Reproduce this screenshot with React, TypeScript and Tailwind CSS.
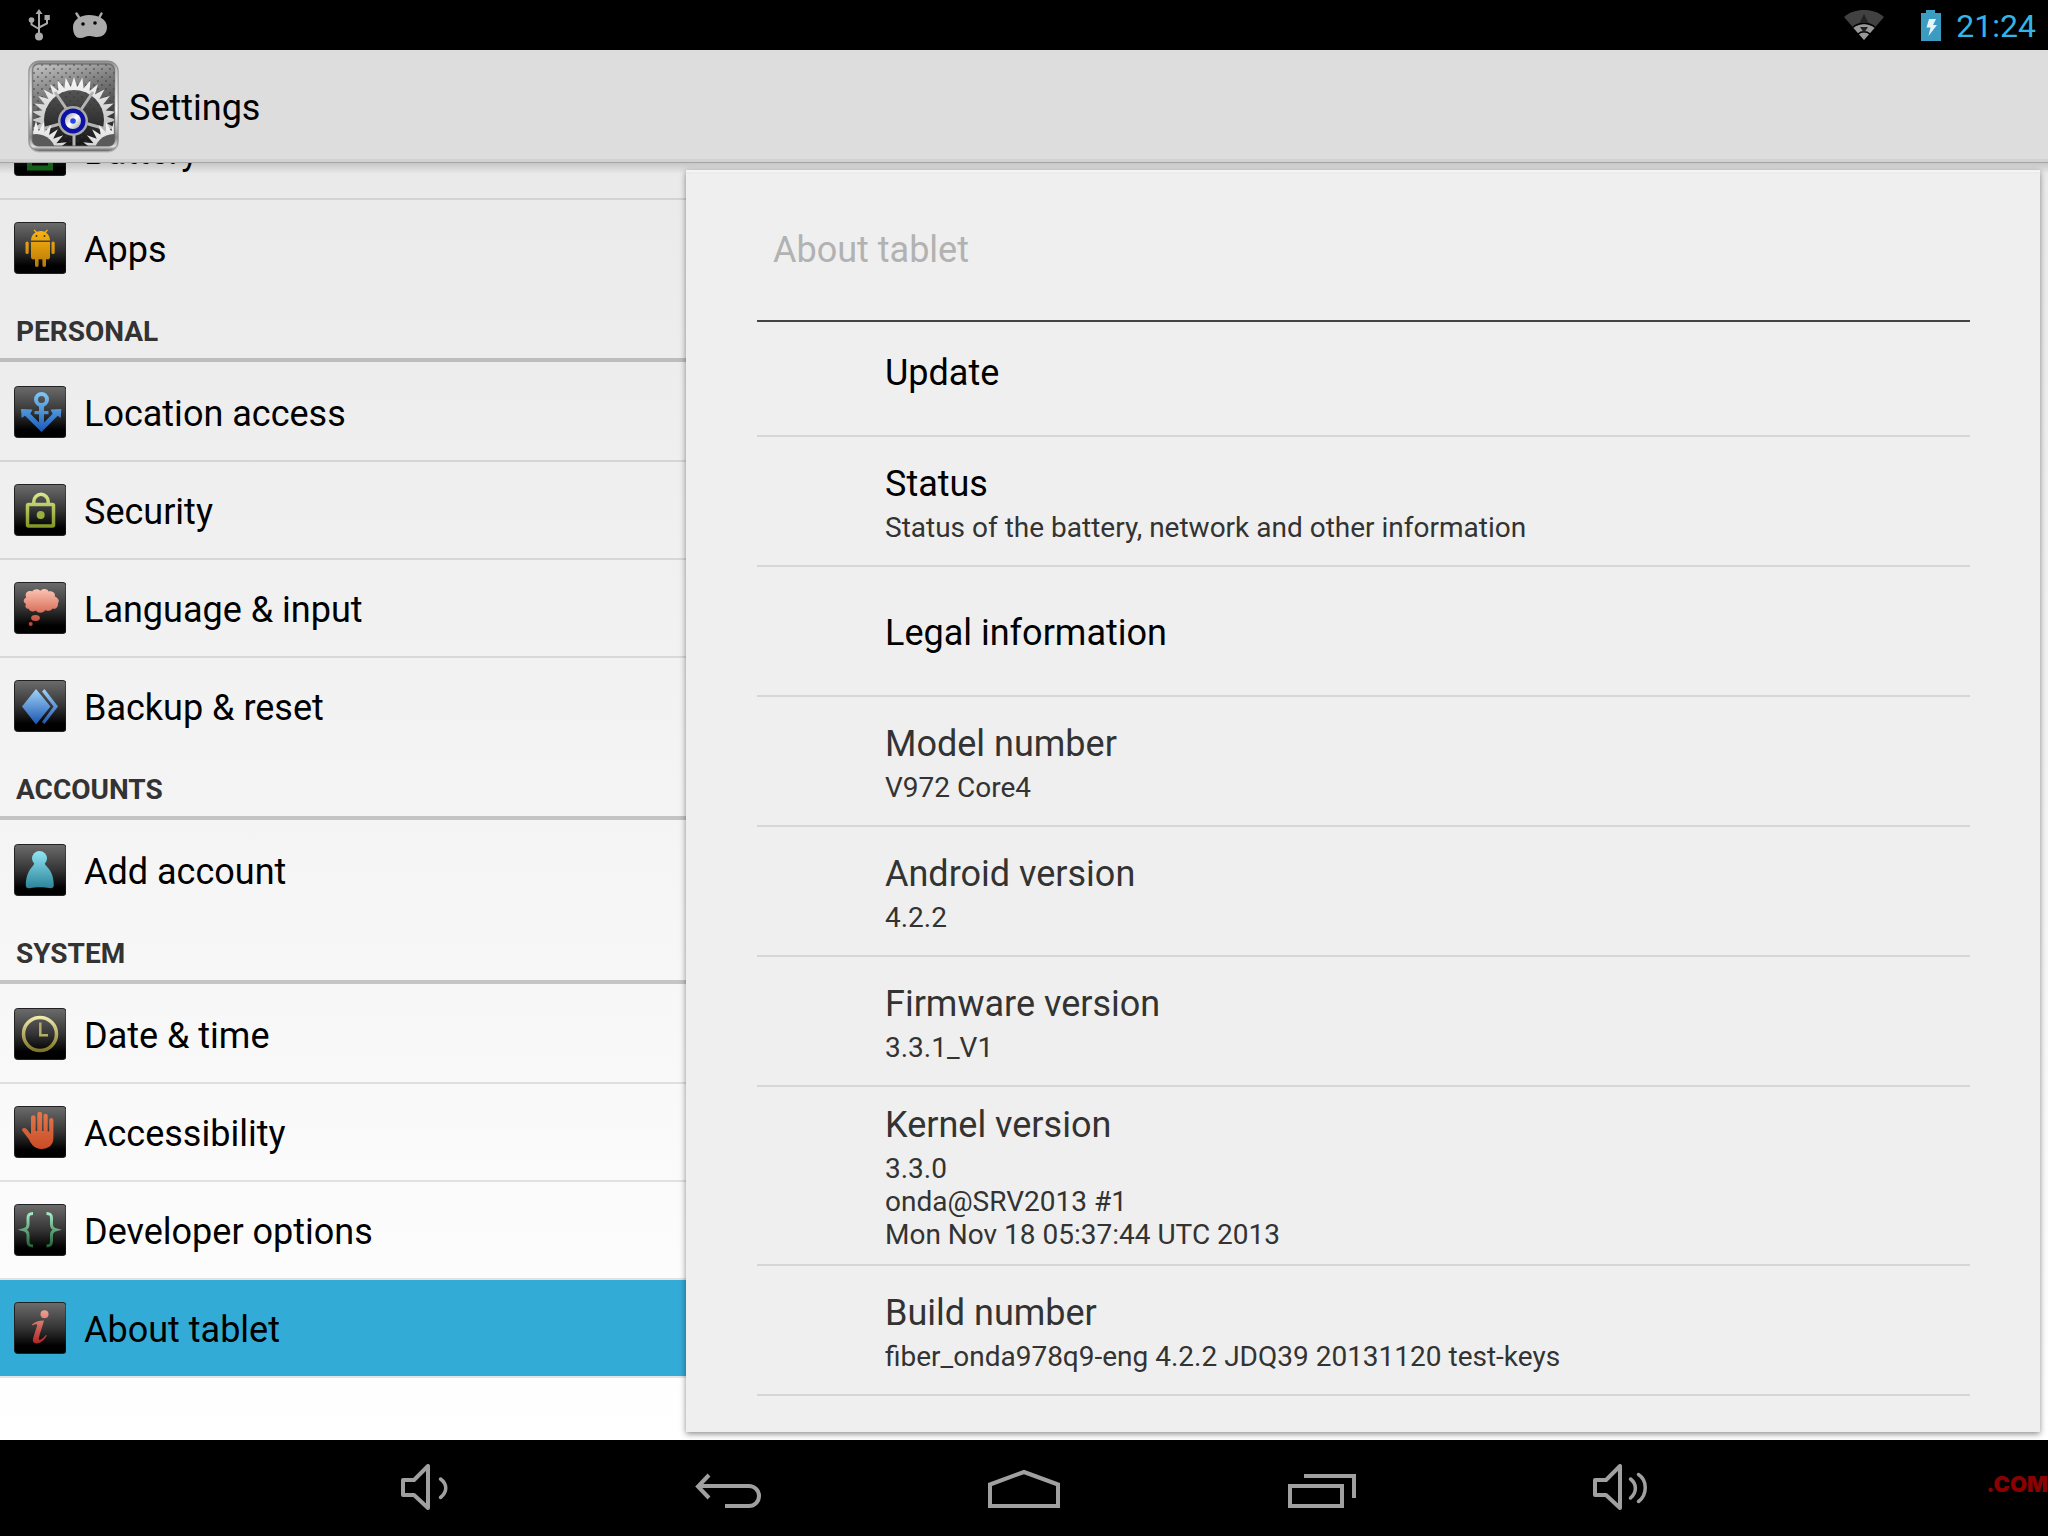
import type { ReactNode } from 'react'

interface NavItem {
  label: string
  icon: ReactNode
  selected?: boolean
}

interface Section {
  title?: string
  items: NavItem[]
}

interface Preference {
  title: string
  summary?: string[]
  enabled?: boolean
}

function Tile({ id, from, to, children }: { id: string; from: string; to: string; children: ReactNode }) {
  return (
    <svg viewBox="0 0 52 52" className="size-[52px] shrink-0" aria-hidden="true">
      <defs>
        <linearGradient id={`${id}-tile`} x1="0" y1="0" x2="0" y2="1">
          <stop offset="0" stopColor="#6c6c6c" />
          <stop offset="0.5" stopColor="#343434" />
          <stop offset="0.85" stopColor="#000" />
        </linearGradient>
        <linearGradient id={id} gradientUnits="userSpaceOnUse" x1="0" y1="8" x2="0" y2="44">
          <stop offset="0" stopColor={from} />
          <stop offset="1" stopColor={to} />
        </linearGradient>
      </defs>
      <rect x="0.5" y="0.5" width="51.5" height="51" rx="3" fill={`url(#${id}-tile)`} stroke="#222" />
      {children}
    </svg>
  )
}

const sections: Section[] = [
  {
    items: [
      {
        label: 'Battery',
        icon: (
          <Tile id="battery" from="#3fae44" to="#15691a">
            <rect x="15.5" y="12" width="21" height="32" fill="none" stroke="url(#battery)" strokeWidth="5" />
          </Tile>
        ),
      },
      {
        label: 'Apps',
        icon: (
          <Tile id="apps" from="#fdb50f" to="#b87a08">
            <g fill="url(#apps)">
              <path d="M17 18.5c0-4 2-6.500 4.500-8L19.500 8l1-.6 2.300 2.400c3-1 5.500-1 8 0L33 7.400l1 .6-2 2.700c2.500 1.700 4 4.200 4 7.800z" />
              <path d="M17 20h19v15c0 1.500-1 2.300-2.300 2.300H32v6a1.800 1.800 0 0 1-3.600 0v-6h-3.800v6a1.800 1.800 0 0 1-3.600 0v-6h-1.700C18 37.300 17 36.500 17 35z" />
              <rect x="11.500" y="19.500" width="3.200" height="12.500" rx="1.500" />
              <rect x="37.500" y="19.500" width="3.200" height="12.500" rx="1.500" />
            </g>
            <circle cx="22.500" cy="14" r="0.900" fill="#3a2c08" />
            <circle cx="30.500" cy="14" r="0.900" fill="#3a2c08" />
          </Tile>
        ),
      },
    ],
  },
  {
    title: 'PERSONAL',
    items: [
      {
        label: 'Location access',
        icon: (
          <Tile id="location" from="#7cc4f2" to="#1c5cba">
            <circle cx="27.500" cy="13.500" r="5.500" fill="none" stroke="url(#location)" strokeWidth="4" />
            <path
              d="M25 20h5v5h4.500v3.200H30V36.500l8.700-8.700L36.500 23.500 47.300 23l-.6 9-3-2.200L27.500 46 11 29.800 7.600 32 7 23l11.500.5-2.200 4.300 8.700 8.700V28.200h-4.500V25H25z"
              fill="url(#location)"
            />
          </Tile>
        ),
      },
      {
        label: 'Security',
        icon: (
          <Tile id="security" from="#dcea8e" to="#7f9422">
            <g fill="none" stroke="url(#security)">
              <rect x="13.500" y="20.500" width="26" height="21.500" rx="1" strokeWidth="3.500" />
              <path d="M19.800 20v-2.500a7.200 7.200 0 0 1 14.400 0V20" strokeWidth="3.500" />
            </g>
            <circle cx="26.700" cy="31" r="4" fill="#9aae3d" />
          </Tile>
        ),
      },
      {
        label: 'Language & input',
        icon: (
          <Tile id="language" from="#fbc0ae" to="#c23f2a">
            <g fill="url(#language)">
              <path d="M12 22c-3-1.500-3-5 .2-6.500-2-4.500 2-7.500 6-6 1.500-3 6.500-3 8.300-.8 2.200-2.500 7-2 8.200.8 4-.8 7 2 6.200 5 3.600 1.500 5 4.500 3 7 .6 4-2.500 6-5.400 5-1.500 2.500-5 3-7 1.500-2.500 3.600-7.500 3.600-9.500.6-3 1.800-6.500.8-7.200-1.800C12 27 10.500 24.500 12 22z" />
              <ellipse cx="21.500" cy="36" rx="4.400" ry="3" />
              <circle cx="16.700" cy="42" r="2" />
            </g>
          </Tile>
        ),
      },
      {
        label: 'Backup & reset',
        icon: (
          <Tile id="backup" from="#a4d7fb" to="#1d57b0">
            <path d="M22 9 36.500 26.500 22 44.500 8 26.500z" fill="url(#backup)" />
            <path d="M28 11.500 30.500 9 44 26.500 30.500 44 28 42 39.500 26.500z" fill="url(#backup)" />
          </Tile>
        ),
      },
    ],
  },
  {
    title: 'ACCOUNTS',
    items: [
      {
        label: 'Add account',
        icon: (
          <Tile id="account" from="#8fe4f4" to="#2b8499">
            <circle cx="25.500" cy="14.500" r="7.500" fill="url(#account)" />
            <path
              d="M20 20h11c.5 2.500 8.800 6 8.800 21 0 3-2 3.500-5 3-4-1-14-1-18 0-3 .6-5.200 0-5-3 .4-15 7.800-18.500 8.200-21z"
              fill="url(#account)"
            />
          </Tile>
        ),
      },
    ],
  },
  {
    title: 'SYSTEM',
    items: [
      {
        label: 'Date & time',
        icon: (
          <Tile id="date" from="#f3edb0" to="#7a7020">
            <circle cx="26" cy="26" r="16.500" fill="none" stroke="url(#date)" strokeWidth="3.500" />
            <path d="M26.300 14.500v12.800H34" fill="none" stroke="#b5ac68" strokeWidth="2.500" />
          </Tile>
        ),
      },
      {
        label: 'Accessibility',
        icon: (
          <Tile id="accessibility" from="#e2764a" to="#c94a25">
            <path
              d="M17 28V11.500a2.300 2.300 0 0 1 4.600 0V25h1.700V8.200a2.400 2.400 0 0 1 4.800 0V25h1.400V9.800a2.100 2.100 0 0 1 4.200 0V25.500h1.500V14a2.100 2.100 0 0 1 4.200 0v18c0 7-5 11-12 11-6 0-9.500-3.500-12.400-9.500L8.200 24.500c-.8-2.300 2-3.300 4-1.800 2 1.600 3 4 4.800 5.300z"
              fill="url(#accessibility)"
            />
          </Tile>
        ),
      },
      {
        label: 'Developer options',
        icon: (
          <Tile id="developer" from="#a9f0cb" to="#1c5c2f">
            <g fill="none" stroke="url(#developer)" strokeWidth="3">
              <path d="M19 9.500c-4 0-5 1.500-5 4.500v6.500c0 3-1.500 4.500-4.500 5.300 3 .8 4.500 2.300 4.500 5.300V37c0 3.500 1 5 5 5" />
              <path d="M32.500 9.500c4 0 5 1.500 5 4.500v6.500c0 3 1.500 4.500 4.500 5.300-3 .8-4.500 2.300-4.500 5.300V37c0 3.500-1 5-5 5" />
            </g>
          </Tile>
        ),
      },
      {
        label: 'About tablet',
        selected: true,
        icon: (
          <Tile id="about" from="#f0a294" to="#a81d1d">
            <circle cx="30.500" cy="12.300" r="4" fill="url(#about)" />
            <path
              d="M18 22.500c3-2.800 6.500-4 12-4-1.500 6-4 12-5 17-.5 2.500.5 2.800 2 2 2-1 3.500-2.800 4.800-4.500l1 .6c-2.500 4.500-6 7.800-10 7.800-3.500 0-4.500-2-3.600-5.400 1-4 2.700-8 3.800-12 .6-2.400-1.600-2.200-4.400-.4z"
              fill="url(#about)"
            />
          </Tile>
        ),
      },
    ],
  },
]

const preferences: Preference[] = [
  { title: 'Update', enabled: true },
  { title: 'Status', summary: ['Status of the battery, network and other information'], enabled: true },
  { title: 'Legal information', enabled: true },
  { title: 'Model number', summary: ['V972 Core4'] },
  { title: 'Android version', summary: ['4.2.2'] },
  { title: 'Firmware version', summary: ['3.3.1_V1'] },
  { title: 'Kernel version', summary: ['3.3.0', 'onda@SRV2013 #1', 'Mon Nov 18 05:37:44 UTC 2013'] },
  { title: 'Build number', summary: ['fiber_onda978q9-eng 4.2.2 JDQ39 20131120 test-keys'] },
]

// Alternates outer and inner radius to get pointed saw teeth
function gearTeeth(cx: number, cy: number, inner: number, outer: number, teeth: number) {
  const points: string[] = []
  for (let i = 0; i < teeth * 2; i++) {
    const r = i % 2 === 0 ? outer : inner
    const a = (i * Math.PI) / teeth - Math.PI / 2
    points.push(`${(cx + r * Math.cos(a)).toFixed(1)},${(cy + r * Math.sin(a)).toFixed(1)}`)
  }
  return points.join(' ')
}

function SettingsLogo() {
  return (
    <svg viewBox="0 0 92 94" className="h-[94px] w-[92px] shrink-0" aria-hidden="true">
      <defs>
        <linearGradient id="logo-rim" x1="0" y1="0" x2="0" y2="1">
          <stop offset="0" stopColor="#888" />
          <stop offset="0.1" stopColor="#c4c4c4" />
          <stop offset="0.55" stopColor="#fff" />
          <stop offset="0.85" stopColor="#8a8a8a" />
          <stop offset="0.95" stopColor="#ddd" />
          <stop offset="1" stopColor="#555" />
        </linearGradient>
        <linearGradient id="logo-face" x1="0" y1="0" x2="0.3" y2="1">
          <stop offset="0" stopColor="#c8c8c8" />
          <stop offset="0.4" stopColor="#7c7c7c" />
          <stop offset="1" stopColor="#222" />
        </linearGradient>
        <linearGradient id="logo-gear" x1="0" y1="0" x2="0" y2="1">
          <stop offset="0" stopColor="#fafafa" />
          <stop offset="1" stopColor="#9a9a9a" />
        </linearGradient>
        <linearGradient id="logo-dark" x1="0" y1="0" x2="0" y2="1">
          <stop offset="0" stopColor="#555" />
          <stop offset="1" stopColor="#111" />
        </linearGradient>
        <linearGradient id="logo-hub" x1="0" y1="0" x2="1" y2="1">
          <stop offset="0" stopColor="#999" />
          <stop offset="0.5" stopColor="#fff" />
          <stop offset="1" stopColor="#999" />
        </linearGradient>
        <pattern id="logo-dots" width="8" height="8" patternUnits="userSpaceOnUse">
          <circle cx="2" cy="2" r="0.800" fill="#333" />
          <circle cx="6" cy="6" r="0.800" fill="#333" />
        </pattern>
        <clipPath id="logo-clip">
          <rect x="4.500" y="5" width="82" height="82" rx="6" />
        </clipPath>
      </defs>
      <rect x="0" y="1.500" width="91" height="92" rx="11" fill="#555" opacity="0.250" />
      <rect x="1" y="2" width="89" height="90" rx="10" fill="url(#logo-rim)" stroke="#888" strokeWidth="0.800" />
      <g clipPath="url(#logo-clip)">
        <rect x="4" y="5" width="83" height="82" fill="url(#logo-face)" />
        <rect x="4" y="5" width="83" height="82" fill="url(#logo-dots)" />
        <polygon points={gearTeeth(46, 61, 33, 43, 32)} fill="url(#logo-gear)" />
        <circle cx="46" cy="61" r="30" fill="url(#logo-dark)" />
        <circle cx="46" cy="61" r="30" fill="url(#logo-dots)" />
        <path d="M46 61V92M46 61 27 33M46 61 65 33M46 61 14 70M46 61 78 70" stroke="#b4b4b4" strokeWidth="3" />
        <polygon points={gearTeeth(8, 95, 23, 33, 26)} fill="url(#logo-gear)" />
        <circle cx="8" cy="95" r="20" fill="#5a5a5a" />
        <polygon points={gearTeeth(86, 95, 23, 33, 26)} fill="url(#logo-gear)" />
        <circle cx="86" cy="95" r="20" fill="#5a5a5a" />
        <circle cx="45" cy="62" r="15" fill="#aaa" />
        <circle cx="45" cy="62" r="12.500" fill="#0c12a4" />
        <circle cx="45" cy="62" r="8" fill="url(#logo-hub)" />
        <circle cx="45" cy="62" r="2.800" fill="#2347e8" />
      </g>
      <rect x="4.500" y="5" width="82" height="82" rx="6" fill="none" stroke="#555" strokeWidth="1.500" opacity="0.600" />
    </svg>
  )
}

function StatusBar() {
  return (
    <div className="flex h-[50px] items-center justify-between bg-black pr-3 pl-7">
      <div className="flex items-center gap-[22px]">
        <svg viewBox="0 0 22 32" className="h-8 w-[22px]" aria-label="USB connected">
          <g fill="none" stroke="#aaa" strokeWidth="2">
            <path d="M11 5v23M3.500 11v4.500L11 20M19 9v5.500L11 18.500" />
          </g>
          <path d="M11 0 14.500 5h-7z" fill="#aaa" />
          <circle cx="3.500" cy="11" r="2.800" fill="#aaa" />
          <rect x="16.500" y="6" width="5.300" height="5" fill="#aaa" />
          <circle cx="11" cy="27.500" r="4" fill="#aaa" />
        </svg>
        <svg viewBox="0 0 36 28" className="h-7 w-9" aria-label="USB debugging">
          <path d="M4.500 2.500 8 8M29.500 2.500 27 7" stroke="#aaa" strokeWidth="2.500" strokeLinecap="round" />
          <path
            d="M1 16C1 9 8 4 17 4s18 4 18 12c0 7-5 10-10 10-4 0-5-1-8-1s-5 2-9 2c-5 0-7-5-7-11z"
            fill="#aaa"
          />
          <circle cx="11" cy="13" r="1.800" fill="#000" />
          <circle cx="23" cy="12" r="1.800" fill="#000" />
        </svg>
      </div>
      <div className="flex items-center">
        <svg viewBox="0 0 40 32" className="mr-[37px] h-8 w-10" aria-label="Wi-Fi">
          <path d="M0 8C6 3 12 1 20 1s14 2 20 7L20 31z" fill="#414141" />
          <path d="M9.500 19c6-5 15-5 21 0L20 31z" fill="#999" />
          <path d="M9 18c6.500-5 15.500-5 22 0M14 25c3.500-3 8.500-3 12 0" fill="none" stroke="#000" strokeWidth="1.500" />
          <path d="M20 5l4.500 9h-9zM16 18h8l-4 6z" fill="#222" />
        </svg>
        <svg viewBox="0 0 20 31" className="mr-[15px] h-[31px] w-5" aria-label="Battery charging">
          <path d="M0 3h5V0h9v3h6v28H0z" fill="#3b9bc0" />
          <path d="M8 9h7l-3 6h4L7.500 26l2-8.500H5.500z" fill="#e4f4fb" />
        </svg>
        <time className="pt-[2px] text-[32px] leading-10 text-[#33b5e5]">21:24</time>
      </div>
    </div>
  )
}

function Sidebar() {
  return (
    <nav className="w-[686px] shrink-0 overflow-hidden">
      {/* list is scrolled so that Battery is partly under the action bar */}
      <div className="-mt-15">
        {sections.map((section) => (
          <section key={section.title ?? 'device'}>
            {section.title && (
              <h2 className="h-[68px] pb-[2px]">
                <span className="flex h-full items-center border-b-4 border-black/20 px-4 pt-[10px] text-[28px] leading-8 font-bold text-[#333]">
                  {section.title}
                </span>
              </h2>
            )}
            <ul>
              {section.items.map((item, i) => {
                const last = i === section.items.length - 1 && section.title !== 'SYSTEM'
                return (
                  <li key={item.label} className={last ? '' : 'border-b-2 border-black/10'}>
                    <a
                      href="#"
                      aria-current={item.selected ? 'page' : undefined}
                      className={`flex h-24 items-center gap-[18px] pl-[14px] text-[36px] leading-[42px] text-black ${
                        item.selected ? 'bg-[#33abd7]' : ''
                      }`}
                    >
                      {item.icon}
                      <span className="pt-[3px]">{item.label}</span>
                    </a>
                  </li>
                )
              })}
            </ul>
          </section>
        ))}
      </div>
    </nav>
  )
}

function DetailPane() {
  return (
    <main className="mt-2 mr-2 mb-2 flex flex-1 flex-col border-t-2 border-white bg-[#efefef] pr-[70px] pl-[71px] shadow-[0_2px_6px_rgba(0,0,0,0.450)]">
      <h1 className="flex h-[150px] shrink-0 items-center border-b-2 border-[#444] px-4 pt-2 text-[36px] leading-[42px] text-[#b2b2b2]">
        About tablet
      </h1>
      <div className="overflow-hidden">
        <ul className="-mt-[15px]">
          {preferences.map((pref) => (
            <li
              key={pref.title}
              className="flex min-h-[130px] flex-col justify-center border-b-2 border-black/10 py-[13px] pl-32"
            >
              <h3 className={`pt-1 text-[36px] leading-[42px] ${pref.enabled ? 'text-black' : 'text-[#333]'}`}>
                {pref.title}
              </h3>
              {pref.summary && (
                <div className="mt-[6px] text-[28px] leading-[33px] text-[#333]">
                  {pref.summary.map((line) => (
                    <p key={line}>{line}</p>
                  ))}
                </div>
              )}
            </li>
          ))}
        </ul>
      </div>
    </main>
  )
}

function NavButton({ label, children }: { label: string; children: ReactNode }) {
  return (
    <button type="button" aria-label={label} className="flex w-[298px] items-center justify-center">
      <svg viewBox="0 0 72 48" className="h-12 w-[72px]" fill="none" stroke="#a0a0a0" strokeWidth="4">
        {children}
      </svg>
    </button>
  )
}

function NavigationBar() {
  return (
    <div className="relative flex h-24 justify-center overflow-hidden bg-black">
      <NavButton label="Volume down">
        <path d="M11 16h11L36 2v42L22 31H11z" strokeLinejoin="round" />
        <path d="M48.500 15c7 5 7 13 0 18.500" strokeWidth="3.500" strokeLinecap="round" />
      </NavButton>
      <NavButton label="Back">
        <path d="M19 11 8 22.500 19 34M9 22h50a10 10 0 0 1 0 20H35" />
      </NavButton>
      <NavButton label="Home">
        <path d="M2 42V20.500L36 8l34 12.500V42z" />
      </NavButton>
      <NavButton label="Recent apps">
        <path d="M4 22h52v20H4zM18 12h50v22" />
      </NavButton>
      <NavButton label="Volume up">
        <path d="M11 16h11L36 2v42L22 31H11z" strokeLinejoin="round" />
        <path
          d="M46.500 15c6.500 5 6.500 13 0 19M54.500 10.500c9 6 9 20 0 27"
          strokeWidth="3.500"
          strokeLinecap="round"
        />
      </NavButton>
      <span className="absolute top-7 right-0 font-[Inter,sans-serif] text-[22px] leading-[32px] font-black text-[#8b0000]">
        .COM
      </span>
    </div>
  )
}

export default function App() {
  return (
    <div className="flex h-screen flex-col overflow-hidden font-[Roboto,sans-serif]">
      <StatusBar />
      <header className="flex h-[113px] shrink-0 items-center gap-[9px] border-b border-[#a5a5a5] bg-[#ddd] pl-7 shadow-[inset_0_-3px_0_#d2d2d2]">
        <SettingsLogo />
        <span className="pt-[3px] text-[36px] leading-[42px] text-black">Settings</span>
      </header>
      <div className="relative -mt-px flex min-h-0 flex-1 bg-linear-to-b from-[#eaeaea] via-[#f4f4f4] to-white">
        <Sidebar />
        <DetailPane />
        <div className="pointer-events-none absolute inset-x-0 top-0 h-3 border-t border-[#a5a5a5] bg-linear-to-b from-black/15 to-transparent" />
      </div>
      <NavigationBar />
    </div>
  )
}
